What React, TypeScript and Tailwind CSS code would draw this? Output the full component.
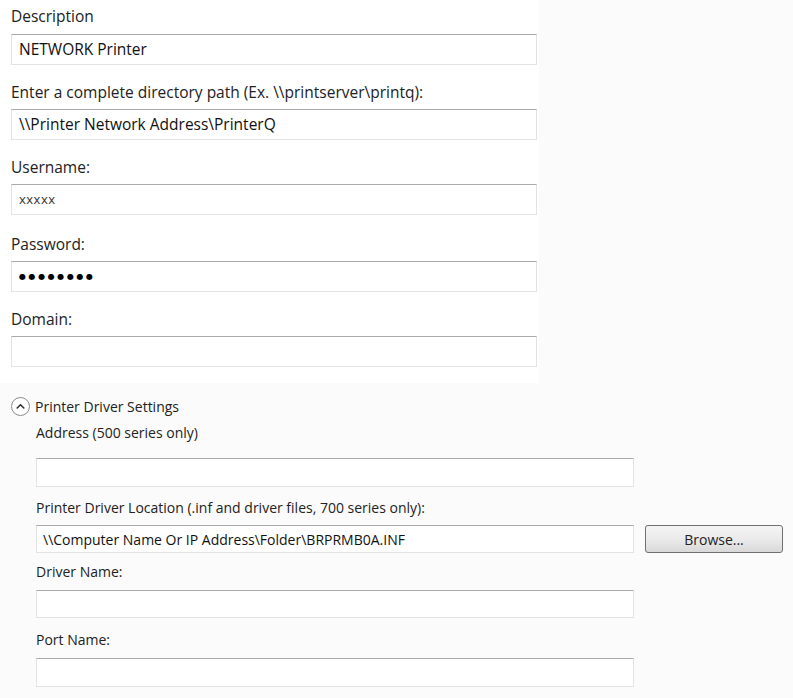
import React from 'react';

function Field({ label, value, className = '', inputClass = '', labelClass = '' }: {
    label: string; value?: React.ReactNode; className?: string; inputClass?: string; labelClass?: string;
}) {
    return (
        <div className={`flex flex-col ${className}`}>
            <div className={`text-[#222] leading-[20px] ${labelClass}`}>{label}</div>
            <div className={`flex items-center border border-[#e3e3e3] border-t-[#a9a9a9] bg-white ${inputClass}`}>
                {value}
            </div>
        </div>
    );
}

function ChevronCircle() {
    return (
        <div className="w-[19px] h-[19px] rounded-full border border-[#8c8c8c] bg-white flex items-center justify-center">
            <svg width="9" height="6" viewBox="0 0 9 6" fill="none">
                <path d="M1.2 5L4.5 1.7 7.8 5" stroke="#333" strokeWidth="1.6" strokeLinecap="round" strokeLinejoin="round" />
            </svg>
        </div>
    );
}

export default function App() {
    const top = 'h-[31px] w-[526px] pl-[7px] text-[15.5px] text-[#111]';
    const bottom = 'w-[598px] pl-[6px] text-[14px] text-[#111]';
    return (
        <div className="w-[793px] h-[698px] bg-[#fbfbfb] overflow-hidden" style={{ fontFamily: '"Open Sans", "Noto Sans", sans-serif' }}>
            <div className="w-[539px] bg-white pl-[11px] pt-[6px] pb-[16px] text-[15.5px]">
                <Field label="Description" value="NETWORK Printer" inputClass={`${top} mt-[8px]`} />
                <Field label="Enter a complete directory path (Ex. \\printserver\printq):" value="\\Printer Network Address\PrinterQ" className="mt-[17px]" inputClass={`${top} mt-[7px]`} />
                <Field label="Username:" className="mt-[17px]" inputClass={`${top} mt-[7px]`}
                       value={<span className="text-[13px] tracking-[0.5px] text-[#333]">xxxxx</span>} />
                <Field label="Password:" className="mt-[19px]" inputClass={`${top} mt-[7px] pl-[5px]`}
                       value={<span className="text-[8px] tracking-[2.6px] text-black" style={{ fontFamily: '"DejaVu Sans", sans-serif' }}>●●●●●●●●</span>} />
                <Field label="Domain:" className="mt-[17px]" inputClass={`${top} mt-[7px]`} />
            </div>
            <div className="pl-[11px] pt-[13px] text-[14px] text-[#222]">
                <div className="flex items-center gap-[5px] h-[20px]">
                    <ChevronCircle />
                    <span>Printer Driver Settings</span>
                </div>
                <div className="pl-[25px]">
                    <Field label="Address (500 series only)" className="mt-[7px]" inputClass={`${bottom} h-[29px] mt-[15px]`} />
                    <div className="mt-[11px] leading-[20px]">Printer Driver Location (.inf and driver files, 700 series only):</div>
                    <div className="mt-[7px] flex items-center gap-[11px]">
                        <div className={`flex items-center border border-[#e3e3e3] border-t-[#a9a9a9] bg-white h-[28px] ${bottom}`}>
                            \\Computer Name Or IP Address\Folder\BRPRMB0A.INF
                        </div>
                        <button className="w-[138px] h-[28px] rounded-[3px] border border-[#707070] bg-gradient-to-b from-[#f4f4f4] via-[#ebebeb] to-[#d9d9d9] text-[14px] text-[#222]">
                            Browse...
                        </button>
                    </div>
                    <Field label="Driver Name:" className="mt-[9px]" inputClass={`${bottom} h-[28px] mt-[8px]`} />
                    <Field label="Port Name:" className="mt-[12px]" inputClass={`${bottom} h-[29px] mt-[8px] border-[#c9d8e8] border-t-[#9fb3c8]`} />
                </div>
            </div>
        </div>
    );
}
